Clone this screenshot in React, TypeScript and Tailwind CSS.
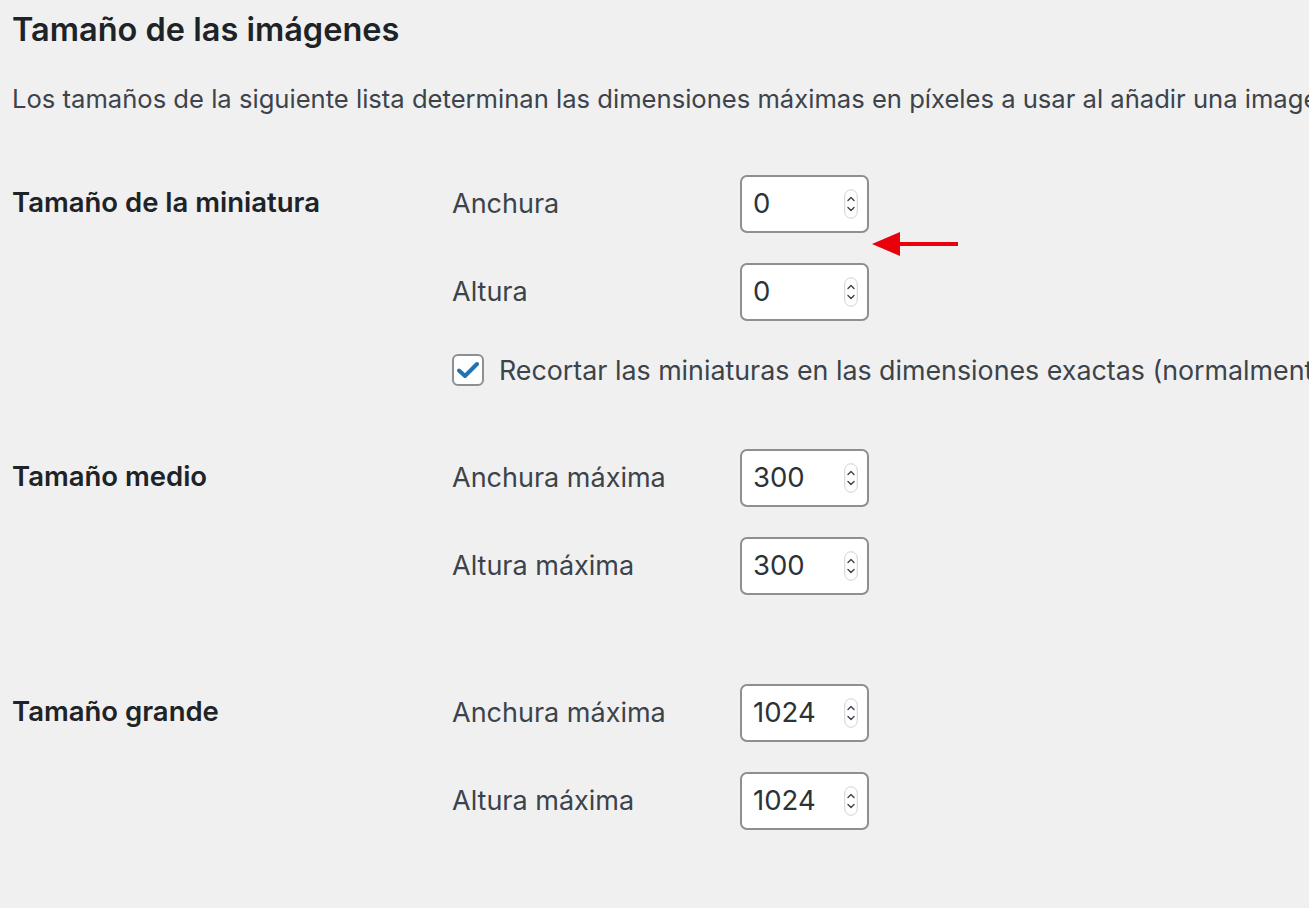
const font = { fontFamily: 'Inter, "Noto Sans", sans-serif' };

function Spinner() {
  return (
    <svg width="14" height="30" viewBox="0 0 14 30" className="shrink-0">
      <rect x="0.75" y="0.75" width="12.5" height="28.5" rx="6.25" fill="#fff" stroke="#d0d1d3" strokeWidth="1" />
      <path d="M4 11.5 L7 8.5 L10 11.5" fill="none" stroke="#3c434a" strokeWidth="1.4" strokeLinecap="round" strokeLinejoin="round" />
      <path d="M4 18.5 L7 21.5 L10 18.5" fill="none" stroke="#3c434a" strokeWidth="1.4" strokeLinecap="round" strokeLinejoin="round" />
    </svg>
  );
}

function NumberField({ label, value }: { label: string; value: string }) {
  return (
    <div className="flex items-center h-[58px]">
      <span className="w-[288px] text-[27px] leading-[34px] text-[#3c434a]">{label}</span>
      <div className="w-[129px] h-[58px] rounded-[7px] border-2 border-[#8c8f94] bg-white flex items-center pl-[11px] pr-[9px]">
        <span className="flex-1 text-[27.5px] text-[#2c3338]">{value}</span>
        <Spinner />
      </div>
    </div>
  );
}

function Row({ title, children }: { title: string; children: React.ReactNode }) {
  return (
    <div className="flex">
      <div className="w-[440px] shrink-0 pt-[10px] text-[27.5px] leading-[34px] font-semibold text-[#1d2327]">{title}</div>
      <div className="flex flex-col gap-[30px]">{children}</div>
    </div>
  );
}

export default function App() {
  return (
    <div className="min-h-[908px] w-[1309px] overflow-hidden bg-[#f0f0f1] pl-[12px]" style={font}>
      <h2 className="pt-[10px] text-[32.5px] leading-[40px] font-semibold text-[#1d2327]">Tamaño de las imágenes</h2>
      <p className="mt-[32px] whitespace-nowrap text-[25.6px] leading-[34px] text-[#3c434a]">
        Los tamaños de la siguiente lista determinan las dimensiones máximas en píxeles a usar al añadir una imagen a la biblioteca de medios.
      </p>

      <div className="mt-[59px]">
        <Row title="Tamaño de la miniatura">
          <NumberField label="Anchura" value="0" />
          <div className="relative">
            <NumberField label="Altura" value="0" />
            <svg className="absolute left-[420px] -top-[32px]" width="90" height="26" viewBox="0 0 90 26">
              <path d="M26 11 H86 V15 H26 Z" fill="#e8000b" />
              <path d="M0 13 L28 1 L28 25 Z" fill="#e8000b" />
            </svg>
          </div>
          <div className="flex items-center h-[32px] mt-[3px] whitespace-nowrap">
            <div className="w-[32px] h-[32px] rounded-[6px] border-2 border-[#8c8f94] bg-white flex items-center justify-center shrink-0">
              <svg width="22" height="18" viewBox="0 0 22 18">
                <path d="M2 9.5 L8 15 L20 3" fill="none" stroke="#2271b1" strokeWidth="4" strokeLinecap="round" strokeLinejoin="round" />
              </svg>
            </div>
            <span className="ml-[15px] text-[26.8px] leading-[32px] text-[#3c434a]">
              Recortar las miniaturas en las dimensiones exactas (normalmente las miniaturas son proporcionales)
            </span>
          </div>
        </Row>

        <div className="mt-[63px]">
          <Row title="Tamaño medio">
            <NumberField label="Anchura máxima" value="300" />
            <NumberField label="Altura máxima" value="300" />
          </Row>
        </div>

        <div className="mt-[89px]">
          <Row title="Tamaño grande">
            <NumberField label="Anchura máxima" value="1024" />
            <NumberField label="Altura máxima" value="1024" />
          </Row>
        </div>
      </div>
    </div>
  );
}
